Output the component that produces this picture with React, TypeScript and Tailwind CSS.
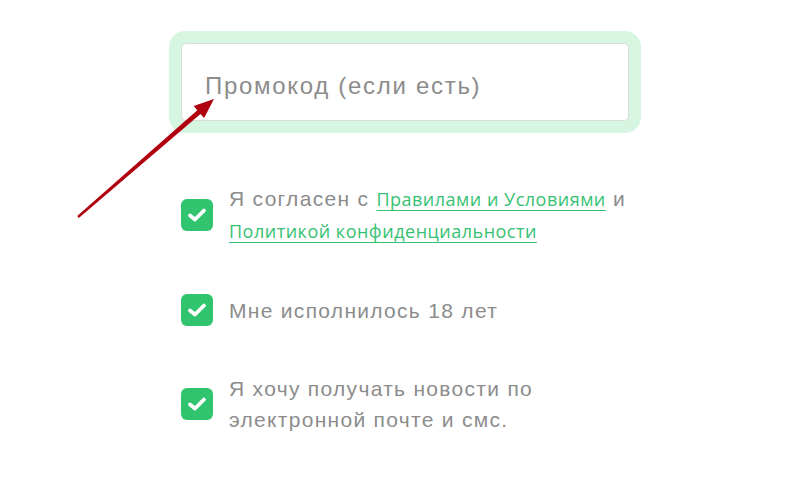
import React from "react";

const CheckBox = () => (
  <div className="w-8 h-8 shrink-0 rounded-md bg-[#30c46e] flex items-center justify-center">
    <svg width="20" height="16" viewBox="0 0 20 16" fill="none">
      <path d="M3 8.5 L8 12.5 L17 3.5" stroke="white" strokeWidth="3.8" strokeLinecap="round" strokeLinejoin="round" />
    </svg>
  </div>
);

const Row = ({ children }: { children: React.ReactNode }) => (
  <div className="flex items-center gap-4">
    <CheckBox />
    <div className="text-[21px] leading-[31px] tracking-[1.3px] text-[#8c8c8c] max-w-[405px]">{children}</div>
  </div>
);

const Link = ({ children }: { children: React.ReactNode }) => (
  <a href="#" className="font-['Open_Sans',sans-serif] text-[18px] tracking-[0.5px] text-[#36c172] underline underline-offset-[4px]">
    {children}
  </a>
);

const App = () => {
  return (
    <div className="relative w-[800px] h-[480px] bg-white font-['Liberation_Sans',Arial,sans-serif] overflow-hidden">
      <div className="pt-[31px] pl-[169px]">
        <div className="w-[472px] rounded-[16px] bg-[#d6f6e2] p-3">
          <input
            className="w-full h-[78px] rounded-[5px] border border-[#d9ded9] bg-white px-[23px] pt-[8px] text-[24px] tracking-[1.7px] text-[#8c8c8c] placeholder:text-[#8c8c8c] outline-none"
            placeholder="Промокод (если есть)"
          />
        </div>
        <div className="pl-3 mt-[50px] flex flex-col gap-[47px]">
          <Row>
            Я согласен с <Link>Правилами и Условиями</Link> и <Link>Политикой конфиденциальности</Link>
          </Row>
          <Row>Мне исполнилось 18 лет</Row>
          <Row>Я хочу получать новости по электронной почте и смс.</Row>
        </div>
      </div>
      {/* arrow */}
      <svg className="absolute left-0 top-0 pointer-events-none" width="800" height="480">
        <polygon
          points="78.8,217.9 200.5,114 204.1,118.1 214,99 193.7,106.1 197.3,110.2 77.2,216.1"
          fill="#b0000f"
        />
      </svg>
    </div>
  );
};

export default App;
